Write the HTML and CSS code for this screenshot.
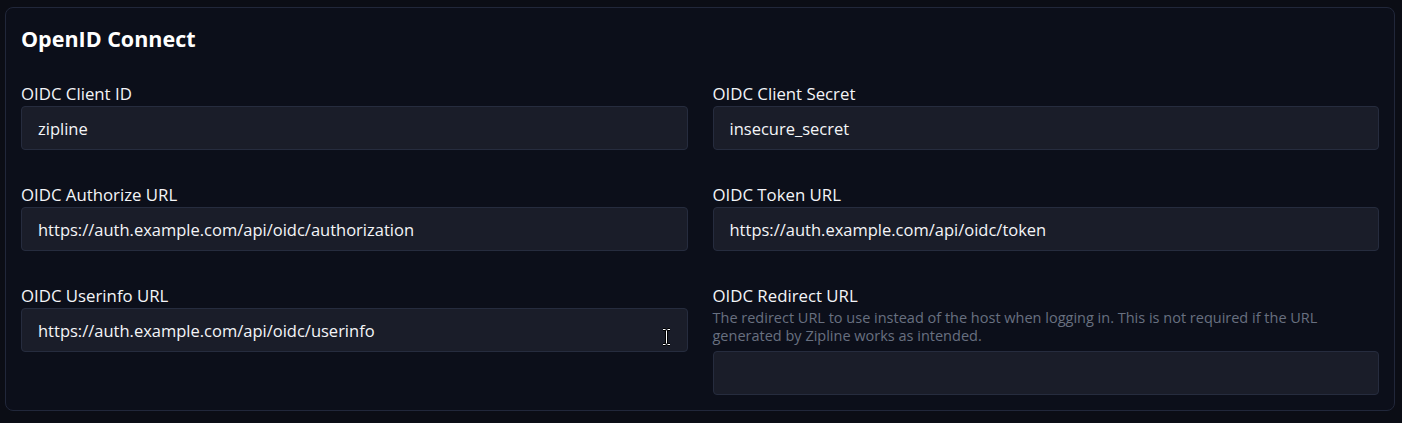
FILE: index.html
```html
<!DOCTYPE html>
<html lang="en">
<head>
<meta charset="utf-8">
<title>OpenID Connect</title>
<link rel="stylesheet" href="styles.css">
</head>
<body>
<section class="card">
  <h2 class="title">OpenID Connect</h2>
  <div class="grid">
    <div class="field">
      <label class="label">OIDC Client ID</label>
      <div class="input">zipline</div>
    </div>
    <div class="field">
      <label class="label">OIDC Client Secret</label>
      <div class="input">insecure_secret</div>
    </div>
    <div class="field">
      <label class="label">OIDC Authorize URL</label>
      <div class="input">https://auth.example.com/api/oidc/authorization</div>
    </div>
    <div class="field">
      <label class="label">OIDC Token URL</label>
      <div class="input">https://auth.example.com/api/oidc/token</div>
    </div>
    <div class="field">
      <label class="label">OIDC Userinfo URL</label>
      <div class="input has-cursor">https://auth.example.com/api/oidc/userinfo
        <svg class="ibeam" width="9" height="18" viewBox="0 0 9 18" aria-hidden="true">
          <path d="M1 1.5h2.5M5.5 1.5H8M4.5 2.5v13M1 16.5h2.5M5.5 16.5H8" stroke="#000" stroke-width="3" fill="none"/>
          <path d="M1 1.5h2.5M5.5 1.5H8M4.5 2.5v13M1 16.5h2.5M5.5 16.5H8" stroke="#fff" stroke-width="1" fill="none"/>
        </svg>
      </div>
    </div>
    <div class="field">
      <label class="label">OIDC Redirect URL</label>
      <p class="desc">The redirect URL to use instead of the host when logging in. This is not required if the URL generated by Zipline works as intended.</p>
      <div class="input"></div>
    </div>
  </div>
</section>
</body>
</html>
```

FILE: styles.css
```css
html, body {
  margin: 0;
  padding: 0;
}
body {
  background: #0b0d15;
  color: #f4f5f8;
  font-family: "Open Sans", "Noto Sans", sans-serif;
  padding: 7px 7px 0 5px;
  height: 423px;
  box-sizing: border-box;
}
.card {
  background: #0c0f1a;
  border: 1px solid #21273a;
  border-radius: 8px;
  padding: 15px;
  height: 404px;
  box-sizing: border-box;
}
.title {
  margin: 0;
  font-size: 21.5px;
  font-weight: 700;
  line-height: 32px;
  color: #ffffff;
}
.grid {
  margin-top: 27px;
  display: grid;
  grid-template-columns: 1fr 1fr;
  column-gap: 25px;
  row-gap: 33px;
  align-items: start;
}
.field {
  display: flex;
  flex-direction: column;
}
.label {
  font-size: 16.8px;
  line-height: 24px;
  color: #f4f5f8;
}
.desc {
  margin: 1px 0 6px 0;
  font-size: 14.5px;
  line-height: 18px;
  color: #687080;
}
.input {
  position: relative;
  height: 44px;
  box-sizing: border-box;
  background: #1a1d29;
  border: 1px solid #262c3e;
  border-radius: 4px;
  padding: 0 16px;
  display: flex;
  align-items: center;
  font-size: 16.5px;
  color: #f4f5f8;
}
.ibeam {
  position: absolute;
  left: 640px;
  top: 19px;
}
```
